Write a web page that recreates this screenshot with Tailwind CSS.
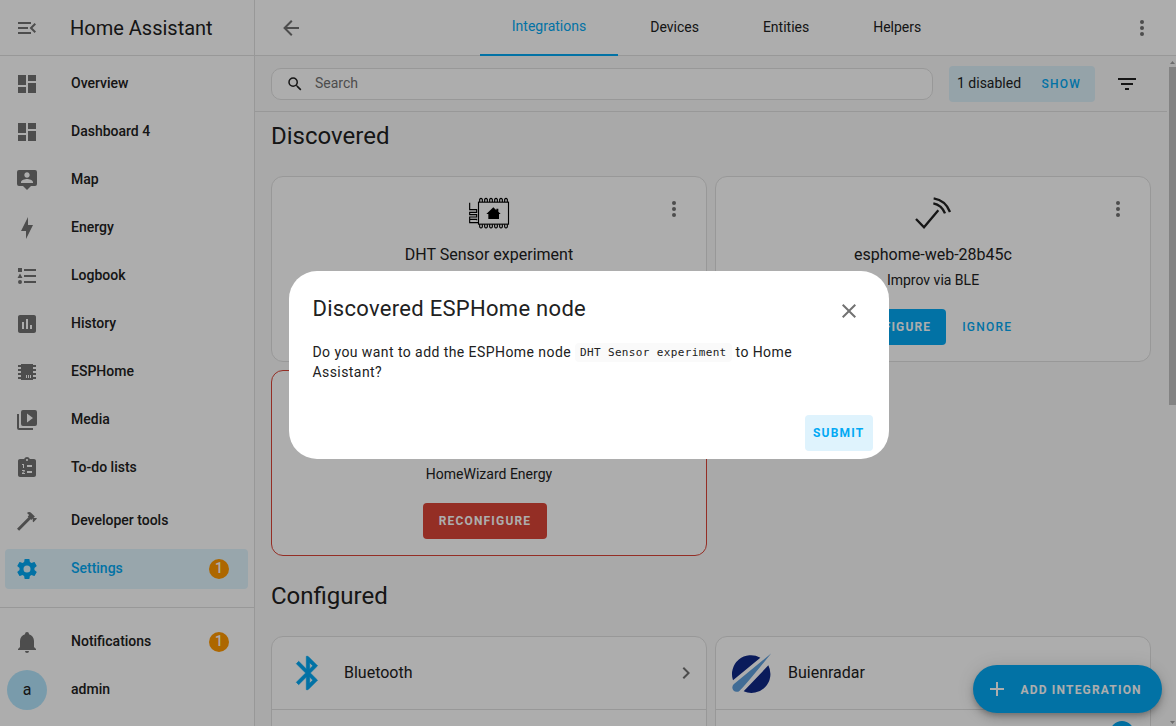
<!DOCTYPE html>
<html lang="en">
<head>
<meta charset="utf-8">
<title>Home Assistant</title>
<script src="https://cdn.jsdelivr.net/npm/@tailwindcss/browser@4"></script>
</head>
<body class="h-[726px] w-[1176px] overflow-hidden bg-[#fafafa] font-['Roboto',sans-serif] text-sm text-[#212121]">
<svg class="hidden">
  <symbol id="dash" viewBox="0 0 24 24"><path d="M13,3V9H21V3M13,21H21V11H13M3,21H11V15H3M3,13H11V3H3V13Z"/></symbol>
  <symbol id="dots" viewBox="0 0 24 24"><circle cx="12" cy="6" r="2"/><circle cx="12" cy="12" r="2"/><circle cx="12" cy="18" r="2"/></symbol>
</svg>
<div class="relative flex h-full">
  <!-- Sidebar -->
  <aside class="flex w-[255px] shrink-0 flex-col border-r border-[#e0e0e0] bg-white font-medium">
    <div class="flex h-14 items-center border-b border-[#e0e0e0] pl-[15px] text-[#727272]">
      <svg class="size-6" viewBox="0 0 24 24" fill="currentColor"><path d="M21,15.61L19.59,17L14.58,12L19.59,7L21,8.39L17.44,12L21,15.61M3,6H16V8H3V6M3,13V11H13V13H3M3,18V16H16V18H3Z"/></svg>
      <span class="ml-[31px] text-xl font-normal text-[#212121]">Home Assistant</span>
    </div>
    <nav class="mt-2 flex flex-col gap-2 px-[5px]">
      <div class="flex h-10 items-center pl-[10px]"><svg class="size-6 fill-[#727272]"><use href="#dash"/></svg><span class="mb-0.5 ml-8">Overview</span></div>
      <div class="flex h-10 items-center pl-[10px]"><svg class="size-6 fill-[#727272]"><use href="#dash"/></svg><span class="mb-0.5 ml-8">Dashboard 4</span></div>
      <div class="flex h-10 items-center pl-[10px]"><svg class="size-6 fill-[#727272]" viewBox="0 0 24 24" fill-rule="evenodd"><path d="M20,2H4A2,2 0 0,0 2,4V16A2,2 0 0,0 4,18H8L12,22L16,18H20A2,2 0 0,0 22,16V4A2,2 0 0,0 20,2M12,4.3C13.5,4.3 14.7,5.5 14.7,7C14.7,8.5 13.5,9.7 12,9.7C10.5,9.7 9.3,8.5 9.3,7C9.3,5.5 10.5,4.3 12,4.3M18,15H6V14.1C6,12.1 10,11 12,11C14,11 18,12.1 18,14.1V15Z"/></svg><span class="mb-0.5 ml-8">Map</span></div>
      <div class="flex h-10 items-center pl-[10px]"><svg class="size-6 fill-[#727272]" viewBox="0 0 24 24"><path d="M11 15H6L13 1V9H18L11 23V15Z"/></svg><span class="mb-0.5 ml-8">Energy</span></div>
      <div class="flex h-10 items-center pl-[10px]"><svg class="size-6 fill-[#727272]" viewBox="0 0 24 24"><path d="M5,9.5L7.5,14H2.5L5,9.5M3,4H7V8H3V4M5,20A2,2 0 0,0 7,18A2,2 0 0,0 5,16A2,2 0 0,0 3,18A2,2 0 0,0 5,20M9,5V7H21V5H9M9,19H21V17H9V19M9,13H21V11H9V13Z"/></svg><span class="mb-0.5 ml-8">Logbook</span></div>
      <div class="flex h-10 items-center pl-[10px]"><svg class="size-6 fill-[#727272]" viewBox="0 0 24 24" fill-rule="evenodd"><path d="M9 17H7V10H9V17M13 17H11V7H13V17M17 17H15V13H17V17M19 3H5C3.9 3 3 3.9 3 5V19C3 20.1 3.9 21 5 21H19C20.1 21 21 20.1 21 19V5C21 3.9 20.1 3 19 3Z"/></svg><span class="mb-0.5 ml-8">History</span></div>
      <div class="flex h-10 items-center pl-[10px]"><svg class="size-6 fill-[#727272]" viewBox="0 0 24 24" fill-rule="evenodd"><path d="M6,4H18V5H21V7H18V9H21V11H18V13H21V15H18V17H21V19H18V20H6V19H3V17H6V15H3V13H6V11H3V9H6V7H3V5H6V4M11,15V18H12V15H11M13,15V18H14V15H13M15,15V18H16V15H15Z"/></svg><span class="mb-0.5 ml-8">ESPHome</span></div>
      <div class="flex h-10 items-center pl-[10px]"><svg class="size-6 fill-[#727272]" viewBox="0 0 24 24" fill-rule="evenodd"><path d="M4,6H2V20A2,2 0 0,0 4,22H18V20H4V6M20,2H8A2,2 0 0,0 6,4V16A2,2 0 0,0 8,18H20A2,2 0 0,0 22,16V4A2,2 0 0,0 20,2M12,14.5V5.5L18,10L12,14.5Z"/></svg><span class="mb-0.5 ml-8">Media</span></div>
      <div class="flex h-10 items-center pl-[10px]"><svg class="size-6 fill-[#727272]" viewBox="0 0 24 24" fill-rule="evenodd"><path d="M19 3H14.82C14.4 1.84 13.3 1 12 1S9.6 1.84 9.18 3H5C3.9 3 3 3.9 3 5V19C3 20.1 3.9 21 5 21H19C20.1 21 21 20.1 21 19V5C21 3.9 20.1 3 19 3M12 3C12.55 3 13 3.45 13 4S12.55 5 12 5 11 4.55 11 4 11.45 3 12 3M7 8H9V12H8V9H7V8M10 17V18H7V17.08L9 15H7V14H9.25C9.66 14 10 14.34 10 14.75C10 14.95 9.92 15.14 9.79 15.27L8.12 17H10M17 17H12V15H17V17M17 11H12V9H17V11Z"/></svg><span class="mb-0.5 ml-8">To-do lists</span></div>
    </nav>
    <nav class="mt-[13px] flex flex-col gap-2 border-b border-[#e0e0e0] pr-[6px] pb-[18px] pl-[5px]">
      <div class="flex h-10 items-center pl-[10px]"><svg class="size-6 fill-[#727272]" viewBox="0 0 24 24"><path d="M2,19.63L13.43,8.2L12.72,7.5L14.14,6.07L12,3.89C13.2,2.7 15.09,2.7 16.27,3.89L19.87,7.5L18.45,8.91H21.29L22,9.62L18.45,13.21L17.74,12.5V9.62L16.27,11.04L15.56,10.33L4.13,21.76L2,19.63Z"/></svg><span class="mb-0.5 ml-8">Developer tools</span></div>
      <div class="flex h-10 items-center rounded bg-[#e1f5fe] pl-[10px] text-[#03a9f4]"><svg class="size-6" viewBox="0 0 24 24" fill="currentColor"><path d="M12,15.5A3.5,3.5 0 0,1 8.5,12A3.5,3.5 0 0,1 12,8.5A3.5,3.5 0 0,1 15.5,12A3.5,3.5 0 0,1 12,15.5M19.43,12.97C19.47,12.65 19.5,12.33 19.5,12C19.5,11.67 19.47,11.34 19.43,11L21.54,9.37C21.73,9.22 21.78,8.95 21.66,8.73L19.66,5.27C19.54,5.05 19.27,4.96 19.05,5.05L16.56,6.05C16.04,5.66 15.5,5.32 14.87,5.07L14.5,2.42C14.46,2.18 14.25,2 14,2H10C9.75,2 9.54,2.18 9.5,2.42L9.13,5.07C8.5,5.32 7.96,5.66 7.44,6.05L4.95,5.05C4.73,4.96 4.46,5.05 4.34,5.27L2.34,8.73C2.21,8.95 2.27,9.22 2.46,9.37L4.57,11C4.53,11.34 4.5,11.67 4.5,12C4.5,12.33 4.53,12.65 4.57,12.97L2.46,14.63C2.27,14.78 2.21,15.05 2.34,15.27L4.34,18.73C4.46,18.95 4.73,19.03 4.95,18.95L7.44,17.94C7.96,18.34 8.5,18.68 9.13,18.93L9.5,21.58C9.54,21.82 9.75,22 10,22H14C14.25,22 14.46,21.82 14.5,21.58L14.87,18.93C15.5,18.67 16.04,18.34 16.56,17.94L19.05,18.95C19.27,19.03 19.54,18.95 19.66,18.73L21.66,15.27C21.78,15.05 21.73,14.78 21.54,14.63L19.43,12.97Z"/></svg><span class="mb-0.5 ml-8">Settings</span><span class="mr-[19px] ml-auto size-5 rounded-full bg-[#ff9800] text-center text-sm leading-[19px] text-white">1</span></div>
    </nav>
    <div class="mt-[14px] flex flex-col gap-2 pr-[6px] pl-[5px]">
      <div class="flex h-10 items-center pl-[10px]"><svg class="size-6 fill-[#727272]" viewBox="0 0 24 24"><path d="M21,19V20H3V19L5,17V11C5,7.9 7.03,5.17 10,4.29C10,4.19 10,4.1 10,4A2,2 0 0,1 12,2A2,2 0 0,1 14,4C14,4.1 14,4.19 14,4.29C16.97,5.17 19,7.9 19,11V17L21,19M14,21A2,2 0 0,1 12,23A2,2 0 0,1 10,21"/></svg><span class="mb-0.5 ml-8">Notifications</span><span class="mr-[19px] ml-auto size-5 rounded-full bg-[#ff9800] text-center text-sm leading-[19px] text-white">1</span></div>
      <div class="flex h-10 items-center pl-[2px]"><span class="size-10 rounded-full bg-[#b3e5fc] text-center text-base leading-10 font-normal">a</span><span class="mb-0.5 ml-6">admin</span></div>
    </div>
  </aside>

  <!-- Main panel -->
  <main class="flex min-w-0 flex-1 flex-col">
    <header class="flex h-14 shrink-0 items-center border-b border-[#e0e0e0] bg-white">
      <svg class="ml-6 size-6 fill-[#727272]" viewBox="0 0 24 24"><path d="M20,11V13H8L13.5,18.5L12.08,19.92L4.16,12L12.08,4.08L13.5,5.5L8,11H20Z"/></svg>
      <div class="-mb-px ml-[177px] flex h-14">
        <div class="w-[138px] border-b-2 border-[#03a9f4] text-center leading-[53px] text-[#03a9f4]">Integrations</div>
        <div class="pr-8 pl-[32.2px] leading-[55px]">Devices</div>
        <div class="px-8 leading-[55px]">Entities</div>
        <div class="px-8 leading-[55px]">Helpers</div>
      </div>
      <svg class="mr-[22px] ml-auto size-6 fill-[#727272]"><use href="#dots"/></svg>
    </header>
    <div class="flex h-14 w-[912px] shrink-0 items-center border-b border-[#e0e0e0] pl-4">
      <div class="flex h-8 w-[662px] items-center rounded-[10px] border border-[#e0e0e0] bg-white pl-[14px] text-[#727272]">
        <svg class="size-[18px] fill-[#212121]" viewBox="0 0 24 24"><path d="M9.5,3A6.5,6.5 0 0,1 16,9.5C16,11.11 15.41,12.59 14.44,13.73L14.71,14H15.5L20.5,19L19,20.5L14,15.5V14.71L13.73,14.44C12.59,15.41 11.11,16 9.5,16A6.5,6.5 0 0,1 3,9.5A6.5,6.5 0 0,1 9.5,3M9.5,5C7,5 5,7 5,9.5C5,12 7,14 9.5,14C12,14 14,12 14,9.5C14,7 12,5 9.5,5Z"/></svg>
        <span class="mb-0.5 ml-[11px]">Search</span>
      </div>
      <div class="ml-4 flex h-9 w-[146px] items-center justify-between rounded bg-[#dcf0f9] pr-3.5 pl-2"><span class="mb-0.5">1 disabled</span><span class="text-xs font-medium tracking-[1.25px] text-[#03a9f4]">SHOW</span></div>
      <svg class="ml-5 size-6 fill-[#212121]" viewBox="0 0 24 24"><path d="M6,13H18V11H6M3,6V8H21V6M10,18H14V16H10V18Z"/></svg>
    </div>
    <div class="min-h-0 flex-1 overflow-hidden pr-[25px] pl-4">
      <h1 class="h-16 text-2xl leading-[48px]">Discovered</h1>
      <div class="grid grid-cols-2 gap-2">
        <section class="relative flex h-[186px] flex-col items-center rounded-xl border border-[#e0e0e0] bg-white pt-4">
          <!-- ESPHome logo -->
          <svg class="h-10 w-[42px]" viewBox="-1 -12 126 120" fill="none" stroke="#000" stroke-width="3.4">
            <rect x="30.500" y="15.500" width="90" height="66"/>
            <path d="M34 15V7q4-6 8 0v8M49 15V7q4-6 8 0v8M64 15V7q4-6 8 0v8M79 15V7q4-6 8 0v8M94 15V7q4-6 8 0v8M109 15V7q4-6 8 0v8M34 82v8q4 6 8 0v-8M49 82v8q4 6 8 0v-8M64 82v8q4 6 8 0v-8M79 82v8q4 6 8 0v-8M94 82v8q4 6 8 0v-8M109 82v8q4 6 8 0v-8"/>
            <path d="M4 17V38H25V46H4V53H25V60H4V67H25V70M30 77H4V68"/>
            <path fill="#000" stroke="none" d="M75 31l9 9v-5h6v9l7 7h-5v15H60V51h-6z"/>
          </svg>
          <svg class="absolute top-5 right-5 size-6 fill-[#727272]"><use href="#dots"/></svg>
          <div class="mt-[10px] text-base leading-6">DHT Sensor experiment</div>
          <div class="mt-[3px] leading-5">ESPHome</div>
        </section>
        <section class="relative flex h-[186px] flex-col items-center rounded-xl border border-[#e0e0e0] bg-white pt-4">
          <svg class="h-10 w-10" viewBox="-6 -10 120 120" fill="none" stroke="#212121" stroke-width="7">
            <path d="M3 68L27 93L70 42M55 21Q80 26 90 51M56 6Q92 12 105 47"/>
          </svg>
          <svg class="absolute top-5 right-5 size-6 fill-[#727272]"><use href="#dots"/></svg>
          <div class="mt-[10px] text-base leading-6">esphome-web-28b45c</div>
          <div class="mt-[3px] leading-5">Improv via BLE</div>
          <div class="mt-[19px] mr-[5px] flex gap-2 text-xs leading-9 font-medium tracking-[1.25px]">
            <span class="rounded bg-[#03a9f4] px-[15px] font-bold tracking-[1.15px] text-white">CONFIGURE</span>
            <span class="px-2 text-[#03a9f4]">IGNORE</span>
          </div>
        </section>
        <section class="relative flex h-[186px] flex-col items-center rounded-xl border border-[#db4437] bg-white pt-[93px]">
          <div class="leading-5">HomeWizard Energy</div>
          <div class="mt-[19px] mr-2 w-[124px] rounded bg-[#db4437] text-center text-xs leading-9 font-bold tracking-[1.18px] text-white">RECONFIGURE</div>
        </section>
      </div>
      <h1 class="mt-4 h-16 text-2xl leading-[48px]">Configured</h1>
      <div class="grid grid-cols-2 gap-2 text-base">
        <section class="h-[180px] rounded-xl border border-[#e0e0e0] bg-white">
          <div class="flex h-[73px] items-center border-b border-[#e0e0e0] pr-2 pl-4">
            <svg class="size-10 fill-[#03a9f4] stroke-[#03a9f4] stroke-[0.4]" stroke-linejoin="round" viewBox="0 0 24 24"><path d="M17.710 7.710L12 2h-1v7.590L6.410 5 5 6.410 10.590 12 5 17.590 6.410 19 11 14.410V22h1l5.710-5.710-4.300-4.290 4.300-4.290zM13 5.830l1.880 1.880L13 9.590V5.830zm1.880 10.460L13 18.170v-3.760l1.880 1.880z"/></svg>
            <span class="mb-px ml-4">Bluetooth</span>
            <svg class="ml-auto size-6 fill-[#727272]" viewBox="0 0 24 24"><path d="M8.590,16.580L13.170,12L8.590,7.410L10,6L16,12L10,18L8.590,16.580Z"/></svg>
          </div>
        </section>
        <section class="h-[180px] rounded-xl border border-[#e0e0e0] bg-white">
          <div class="flex h-[73px] items-center border-b border-[#e0e0e0] pl-[14px]">
            <!-- Buienradar logo -->
            <svg class="mt-px h-[42px] w-[42px]" viewBox="0 0 126 126">
              <path fill="#0f2887" d="M9 82A57 57 0 0 1 91 14ZM41 115A57 57 0 0 0 115 37Z"/>
              <path fill="#60a0dc" d="M124 1L11 94A11 11 0 0 0 29 113Q40 104 124 1Z"/>
            </svg>
            <span class="mb-px ml-4">Buienradar</span>
          </div>
          <div class="mt-[11px] mr-4 ml-auto size-6 rounded-full bg-[#03a9f4]"></div>
        </section>
      </div>
    </div>
  </main>

  <!-- Scrollbar -->
  <div class="absolute top-14 right-0 flex h-[670px] w-[7px] flex-col items-center">
    <svg class="mt-[5px] h-[3px] w-[5px] fill-[#a3a3a3]" viewBox="0 0 5 3"><path d="M0 3L2.500 0L5 3Z"/></svg>
    <div class="mt-[3px] h-[338px] w-full bg-[#c1c1c1]"></div>
    <svg class="mt-auto mb-[2px] h-[3px] w-[5px] fill-[#a3a3a3]" viewBox="0 0 5 3"><path d="M0 0L2.500 3L5 0Z"/></svg>
  </div>

  <!-- Floating action button -->
  <div class="absolute top-[665px] left-[973px] flex h-12 w-[189px] items-center rounded-full bg-[#03a9f4] pl-3 text-white shadow-[0_3px_5px_-1px_rgba(0,0,0,0.2),0_6px_10px_0_rgba(0,0,0,0.14),0_1px_18px_0_rgba(0,0,0,0.12)]">
    <svg class="size-6" viewBox="0 0 24 24" fill="currentColor"><path d="M19,13H13V19H11V13H5V11H11V5H13V11H19V13Z"/></svg>
    <span class="mt-0.5 ml-[11.5px] text-xs font-bold tracking-[1.18px] whitespace-nowrap">ADD INTEGRATION</span>
  </div>

  <!-- Scrim and dialog -->
  <div class="absolute inset-0 bg-black/32"></div>
  <div role="dialog" class="absolute top-[271px] left-[289px] flex h-[188px] w-[600px] flex-col rounded-[28px] bg-white">
    <div class="flex h-[66px] items-center justify-between pt-[9px] pr-7 pl-[23.5px]">
      <h2 class="text-[22px] tracking-[0.29px]">Discovered ESPHome node</h2>
      <svg class="mt-[5px] size-6 fill-[#727272]" viewBox="0 0 24 24"><path d="M19,6.410L17.590,5L12,10.590L6.410,5L5,6.410L10.590,12L5,17.590L6.410,19L12,13.410L17.590,19L19,17.590L13.410,12L19,6.410Z"/></svg>
    </div>
    <p class="mt-[5px] px-[23.5px] leading-5 tracking-[0.43px]">Do you want to add the ESPHome node <code class="rounded bg-[#fafafa] px-[5px] py-[3px] align-[1px] font-['DejaVu_Sans_Mono',monospace] text-[11px] leading-none tracking-[0.36px]">DHT Sensor experiment</code> to Home<br>Assistant?</p>
    <div class="mt-auto mr-4 mb-2 ml-auto w-[68px] rounded bg-[#dff3fd] pl-2 text-xs leading-9 font-bold tracking-[1.18px] text-[#03a9f4]">SUBMIT</div>
  </div>
</div>
</body>
</html>
